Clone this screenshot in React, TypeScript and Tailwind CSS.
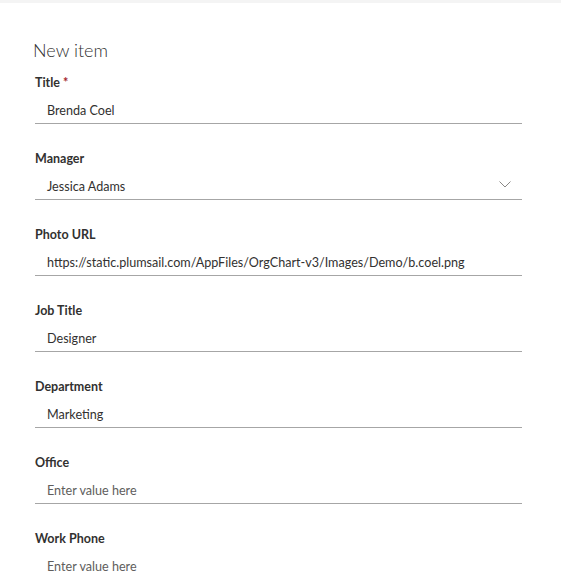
type Field = {
  label: string;
  value?: string;
  required?: boolean;
  dropdown?: boolean;
};

const fields: Field[] = [
  { label: 'Title', value: 'Brenda Coel', required: true },
  { label: 'Manager', value: 'Jessica Adams', dropdown: true },
  {
    label: 'Photo URL',
    value: 'https://static.plumsail.com/AppFiles/OrgChart-v3/Images/Demo/b.coel.png',
  },
  { label: 'Job Title', value: 'Designer' },
  { label: 'Department', value: 'Marketing' },
  { label: 'Office' },
  { label: 'Work Phone' },
];

export default function App() {
  return (
    <div className="h-screen overflow-hidden bg-white font-['Lato',sans-serif] text-[#323130]">
      <div className="h-[3px] bg-[#f4f4f4]" />

      <div className="w-[487px] ml-[35px] pt-[33px]">
        {/* Header */}
        <h1 className="-ml-[2px] mb-[8px] text-[18px] leading-[28px] font-light text-[#323130]">
          New item
        </h1>

        {fields.map((field) => (
          <div key={field.label} className="mb-[24px]">
            <div className="h-[20px] pt-[1px] text-[12.5px] leading-[20px] font-bold">
              {field.label}
              {field.required && <span className="ml-[3px] text-[#a4262c]">*</span>}
            </div>
            <div className="flex h-[32px] items-center justify-between border-b border-[#a6a6a6] pl-[12px] pr-[11px]">
              <span
                className={`self-start pt-[9px] text-[12.6px] leading-[20px] ${
                  field.value ? 'text-[#323130]' : 'text-[#605e5c]'
                }`}
              >
                {field.value ?? 'Enter value here'}
              </span>
              {field.dropdown && (
                <svg width="12" height="7" viewBox="0 0 12 7" fill="none" className="mt-[2px]">
                  <polyline points="0.5,0.5 6,6 11.5,0.5" stroke="#8a8886" strokeWidth="1" />
                </svg>
              )}
            </div>
          </div>
        ))}
      </div>
    </div>
  );
}
